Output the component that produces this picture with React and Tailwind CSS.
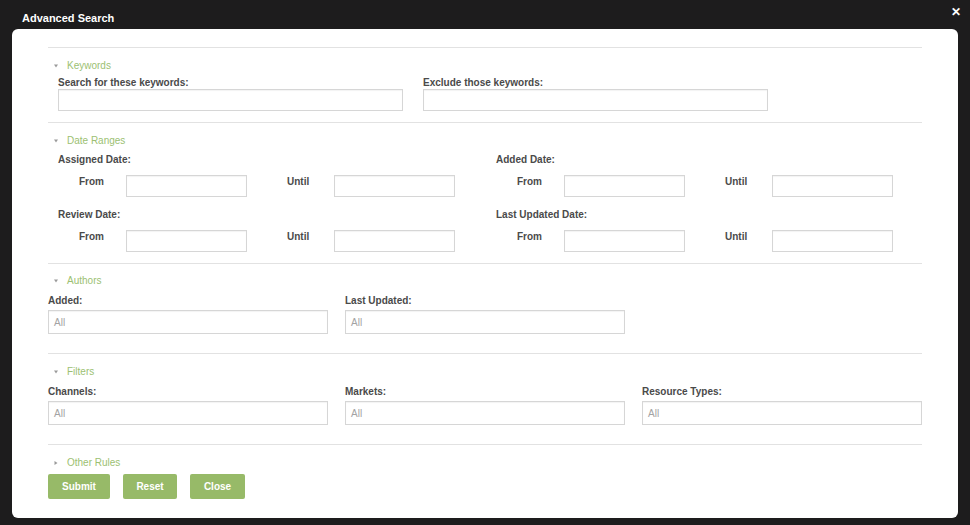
import React from "react";

const font = { fontFamily: '"Liberation Sans", Arial, sans-serif' };

function Caret({ open = true }) {
  return (
    <svg width="4" height="4" viewBox="0 0 4 4" className="mr-[9px] ml-[6px]">
      {open ? <path d="M0 0.5 L4 0.5 L2 3.5 Z" fill="#9a9a9a" /> : <path d="M0.5 0 L3.5 2 L0.5 4 Z" fill="#9a9a9a" />}
    </svg>
  );
}

function Header({ children, open = true }) {
  return (
    <div className="flex items-center h-[12px] text-[10px] leading-[12px] text-[#9cbf72]">
      <Caret open={open} />
      <span>{children}</span>
    </div>
  );
}

function Label({ children, className = "" }) {
  return <div className={"text-[10px] leading-[12px] font-bold text-[#4a4a4a] pt-[1px] " + className}>{children}</div>;
}

function Box({ className = "", placeholder }) {
  return (
    <div className={"border border-[#d6d6d6] bg-white shadow-[inset_0_1px_1px_rgba(0,0,0,0.05)] flex items-center px-[5px] text-[10px] text-[#a3a3a3] " + className}>
      {placeholder}
    </div>
  );
}

function DateGroup({ title }) {
  return (
    <div className="w-[438px] shrink-0">
      <Label>{title}</Label>
      <div className="flex items-start mt-[9px] pl-[21px]">
        <Label className="w-[47px]">From</Label>
        <Box className="w-[121px] h-[22px]" />
        <Label className="w-[47px] ml-[40px]">Until</Label>
        <Box className="w-[121px] h-[22px]" />
      </div>
    </div>
  );
}

function Field({ label, className = "" }) {
  return (
    <div className={className}>
      <Label>{label}</Label>
      <Box className="mt-[3px] h-[24px]" placeholder="All" />
    </div>
  );
}

export default function App() {
  return (
    <div className="w-[970px] h-[525px] bg-[#1d1c1d] flex flex-col overflow-hidden" style={font}>
      <div className="h-[29px] shrink-0 relative flex items-center pl-[22px] pt-[7px]">
        <span className="text-white font-bold text-[11px]">Advanced Search</span>
        <span className="absolute right-[9px] top-[3px] text-white font-bold text-[12px]">✕</span>
      </div>
      <div className="mx-[12px] w-[946px] h-[489px] bg-white rounded-[6px] px-[36px] pt-[18px]">
        <div className="border-t border-[#e2e2e2] pt-[12px] pb-[11px]">
          <Header>Keywords</Header>
          <div className="flex gap-[20px] pl-[10px] mt-[4px]">
            <div className="w-[345px]">
              <Label>Search for these keywords:</Label>
              <Box className="h-[22px]" />
            </div>
            <div className="w-[345px]">
              <Label>Exclude those keywords:</Label>
              <Box className="h-[22px]" />
            </div>
          </div>
        </div>

        <div className="border-t border-[#e2e2e2] pt-[12px] pb-[11px]">
          <Header>Date Ranges</Header>
          <div className="pl-[10px] mt-[6px]">
            <div className="flex">
              <DateGroup title="Assigned Date:" />
              <DateGroup title="Added Date:" />
            </div>
            <div className="flex mt-[11px]">
              <DateGroup title="Review Date:" />
              <DateGroup title="Last Updated Date:" />
            </div>
          </div>
        </div>

        <div className="border-t border-[#e2e2e2] pt-[11px] pb-[19px]">
          <Header>Authors</Header>
          <div className="grid grid-cols-3 gap-x-[17px] mt-[7px]">
            <Field label="Added:" />
            <Field label="Last Updated:" />
          </div>
        </div>

        <div className="border-t border-[#e2e2e2] pt-[12px] pb-[19px]">
          <Header>Filters</Header>
          <div className="grid grid-cols-3 gap-x-[17px] mt-[7px]">
            <Field label="Channels:" />
            <Field label="Markets:" />
            <Field label="Resource Types:" />
          </div>
        </div>

        <div className="border-t border-[#e2e2e2] pt-[12px]">
          <Header open={false}>Other Rules</Header>
          <div className="flex gap-[13px] mt-[5px]">
            <button className="w-[62px] h-[25px] bg-[#97ba68] rounded-[2px] text-white font-bold text-[10px]">Submit</button>
            <button className="w-[54px] h-[25px] bg-[#97ba68] rounded-[2px] text-white font-bold text-[10px]">Reset</button>
            <button className="w-[55px] h-[25px] bg-[#97ba68] rounded-[2px] text-white font-bold text-[10px]">Close</button>
          </div>
        </div>
      </div>
    </div>
  );
}
